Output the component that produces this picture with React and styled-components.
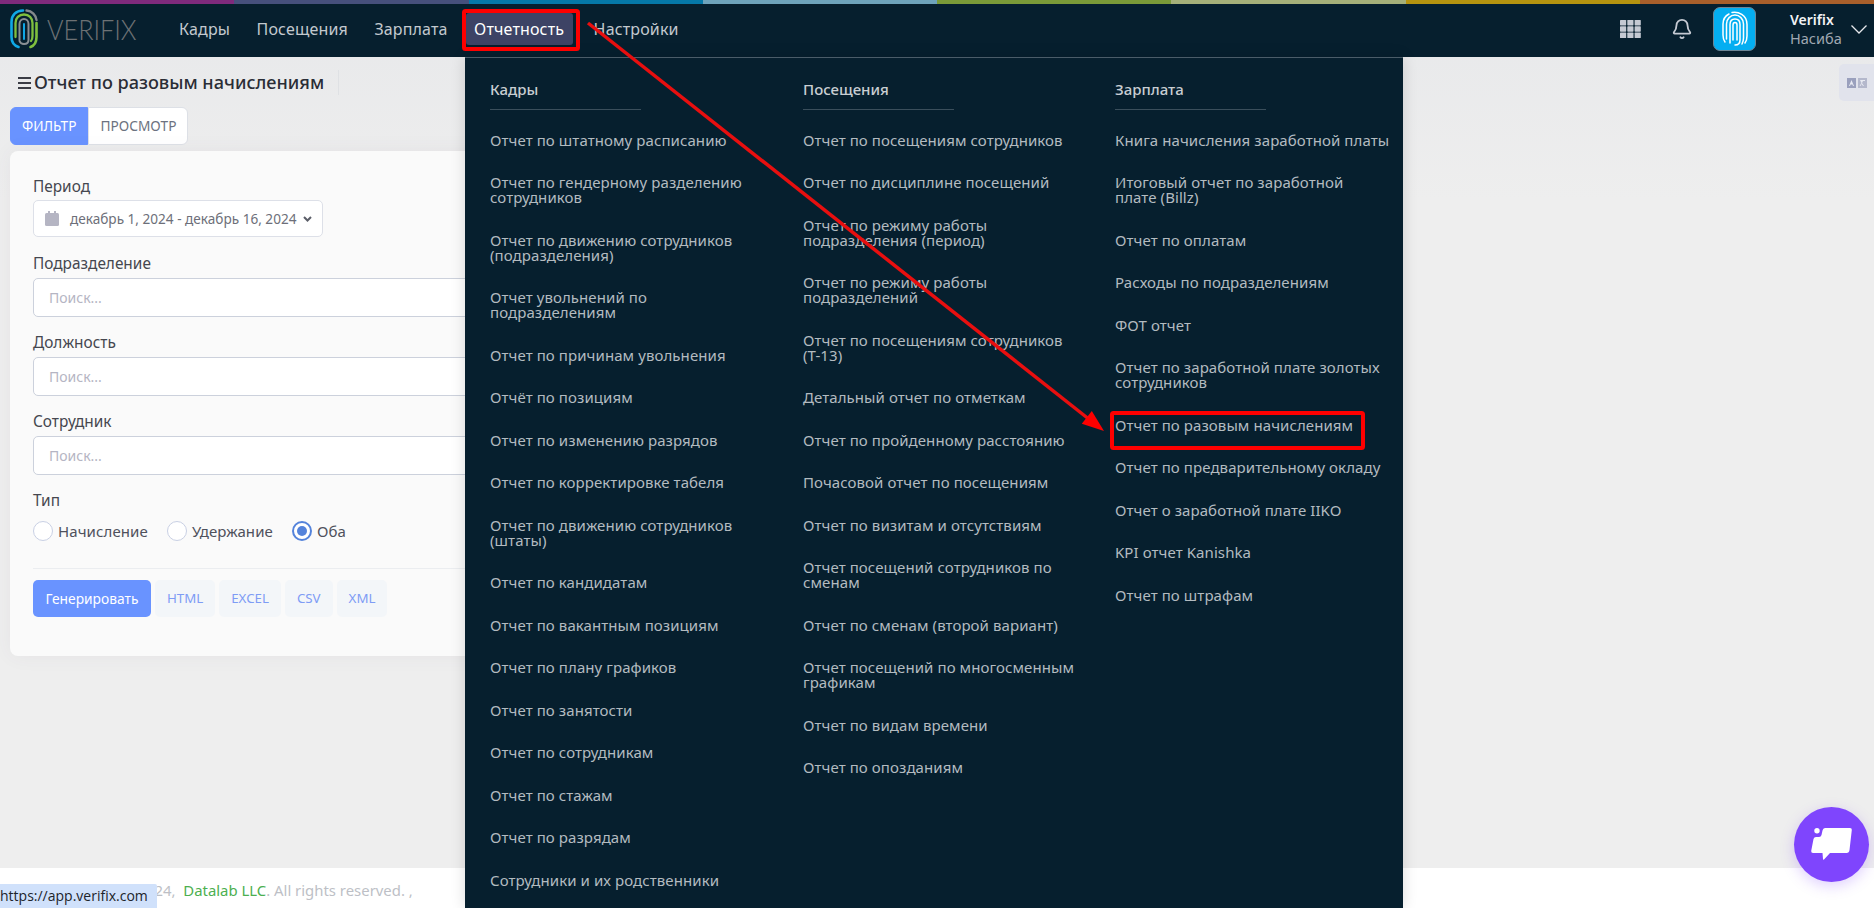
import React from "react";
import styled, { createGlobalStyle } from "styled-components";
import { Bell } from "lucide-react";

const Global = createGlobalStyle`
  html, body { margin: 0; padding: 0; height: 100%; overflow: hidden; }
  body { font-family: "Noto Sans", "Open Sans", sans-serif; background: #eeeeee; }
  * { box-sizing: border-box; }
`;

const Page = styled.div`
  position: relative;
  width: 1874px;
  height: 908px;
  overflow: hidden;
  display: flex;
  flex-direction: column;
  background: linear-gradient(180deg, #e7e8ea 0, #eeeeee 200px);
`;

const Strip = styled.div`
  height: 4px;
  flex: none;
  display: grid;
  grid-template-columns: repeat(8, 1fr);
`;
const StripPart = styled.div`
  background: ${(p) => p.$c};
`;

const Header = styled.header`
  height: 53px;
  flex: none;
  background: #061f2e;
  display: flex;
  align-items: center;
  padding: 0 7px 3px 10px;
`;
const Logo = styled.div`
  display: flex;
  align-items: center;
  gap: 9px;
  width: 160.5px;
`;
const LogoWord = styled.span`
  font-family: "Lato", "Liberation Sans", sans-serif;
  font-size: 28px;
  font-weight: 300;
  color: #6d7174;
  display: inline-block;
  transform: scaleX(0.9);
  transform-origin: left center;
`;
const Nav = styled.nav`
  display: flex;
  align-items: center;
  gap: 9.5px;
`;
const NavItem = styled.a`
  font-size: 16px;
  letter-spacing: 0.15px;
  line-height: 32px;
  height: 32px;
  padding: 0 8.5px;
  margin-right: ${(p) => (p.$active ? "3px" : "0")};
  border-radius: 3px;
  color: ${(p) => (p.$active ? "#ffffff" : "#c3c9ce")};
  background: ${(p) => (p.$active ? "#3d4365" : "transparent")};
`;
const HeaderRight = styled.div`
  margin-left: auto;
  display: flex;
  align-items: center;
`;
const IconSlot = styled.div`
  width: 51px;
  display: flex;
  justify-content: center;
  color: #c5cad3;
`;
const Avatar = styled.div`
  width: 43px;
  height: 44px;
  border-radius: 7px;
  background: #04aef1;
  border: 1px solid #6c8595;
  display: flex;
  align-items: center;
  justify-content: center;
  margin: 0 34px 0 6px;
`;
const UserBlock = styled.div`
  display: flex;
  flex-direction: column;
  line-height: 19px;
  width: 61px;
`;
const UserName = styled.span`
  font-size: 14px;
  font-weight: 600;
  color: #f2f3f5;
`;
const UserRole = styled.span`
  font-size: 14.5px;
  color: #a0a8b2;
`;

const Content = styled.main`
  flex: 1;
  padding: 13px 10px 0;
  display: flex;
  flex-direction: column;
`;
const TitleRow = styled.div`
  display: flex;
  align-items: center;
  height: 25px;
  margin-bottom: 12px;
  padding-left: 8px;
`;
const Title = styled.h1`
  margin: 0 0 0 3px;
  font-size: 18.1px;
  font-weight: 500;
  color: #2a2d36;
  padding-right: 14px;
  border-right: 1px solid #dfe1e4;
  line-height: 25px;
`;
const Tabs = styled.div`
  display: flex;
  width: fit-content;
  height: 38px;
  margin-bottom: 6px;
`;
const Tab = styled.div`
  font-size: 13.7px;
  line-height: 36px;
  padding: 0 11px;
  border: 1px solid ${(p) => (p.$active ? "#6993ff" : "#dde0e6")};
  border-radius: ${(p) => (p.$active ? "6px 0 0 6px" : "0 6px 6px 0")};
  background: ${(p) => (p.$active ? "#6993ff" : "#ffffff")};
  color: ${(p) => (p.$active ? "#ffffff" : "#6c7280")};
`;
const Card = styled.section`
  width: 900px;
  height: 505px;
  background: #fafafa;
  border-radius: 8px;
  padding: 25.5px 23px;
  box-shadow: 0 0 20px rgba(82, 63, 105, 0.06);
`;
const Label = styled.div`
  font-size: 15.4px;
  line-height: 19px;
  color: #45474f;
  margin-bottom: ${(p) => p.$gap ?? 5.5}px;
`;
const DatePicker = styled.div`
  width: 290px;
  height: 37px;
  margin-bottom: 16.5px;
  background: #fff;
  border: 1px solid #dde0e8;
  border-radius: 5px;
  display: flex;
  align-items: center;
  padding-left: 11px;
  font-size: 13.6px;
  color: #6d6f79;
`;
const DateText = styled.span`
  margin-left: 11px;
  margin-right: 7px;
  white-space: nowrap;
`;
const SearchField = styled.div`
  height: 39px;
  margin-bottom: 15.5px;
  background: #fff;
  border: 1px solid #ccd1dc;
  border-radius: 5px;
  padding-left: 15px;
  line-height: 37px;
  font-size: 14px;
  color: #b5b5c3;
`;
const RadioRow = styled.div`
  display: flex;
  align-items: center;
  gap: 19px;
  margin-top: 11.5px;
`;
const RadioLabel = styled.label`
  display: flex;
  align-items: center;
  gap: 5px;
  font-size: 15px;
  letter-spacing: 0.1px;
  line-height: 20px;
  color: #4f515c;
`;
const RadioMark = styled.span`
  width: 20px;
  height: 20px;
  border-radius: 50%;
  background: #fff;
  border: ${(p) => (p.$on ? "2px solid #5483db" : "1px solid #c9d0e4")};
  display: flex;
  align-items: center;
  justify-content: center;
  &::after {
    content: "";
    display: ${(p) => (p.$on ? "block" : "none")};
    width: 10px;
    height: 10px;
    border-radius: 50%;
    background: #5483db;
  }
`;
const Divider = styled.hr`
  border: 0;
  border-top: 1px solid #ebedf0;
  margin: 27px 0 11px;
`;
const Buttons = styled.div`
  display: flex;
  gap: 4px;
`;
const Button = styled.div`
  height: 37px;
  line-height: 37px;
  padding: 0 ${(p) => (p.$primary ? "12.5px" : "12px")};
  border-radius: 5px;
  font-size: ${(p) => (p.$primary ? "13.8px" : "13.3px")};
  background: ${(p) => (p.$primary ? "#6993ff" : "#f3f6f9")};
  color: ${(p) => (p.$primary ? "#ffffff" : "#7e9cf5")};
`;

const Footer = styled.footer`
  height: 40px;
  flex: none;
  background: #ffffff;
  padding: 12px 0 0 154.5px;
  font-size: 14.9px;
  line-height: 20px;
  color: #bdbfc6;
  white-space: pre;
`;
const FooterLink = styled.span`
  color: #4caf50;
`;

const LangButton = styled.div`
  position: absolute;
  right: 0;
  top: 64px;
  width: 35px;
  height: 37px;
  background: #e1e3ec;
  border-radius: 5px 0 0 5px;
  display: flex;
  align-items: center;
  justify-content: center;
`;

const Mega = styled.div`
  position: absolute;
  left: 465px;
  top: 57px;
  width: 938px;
  height: 851px;
  background: #061f2e;
  border-top: 1px solid #4a5c68;
  box-shadow: 0 0 14px rgba(0, 0, 0, 0.14);
  display: grid;
  grid-template-columns: 313px 312px 1fr;
  padding: 21px 0 0 25px;
`;
const MegaCol = styled.div`
  display: flex;
  flex-direction: column;
`;
const MegaHead = styled.div`
  font-size: 15px;
  font-weight: 500;
  line-height: 20px;
  color: #c9ced2;
  width: 151px;
  height: 31px;
  border-bottom: 1px solid #3a4e5b;
  margin-bottom: 8.5px;
`;
const MegaLink = styled.a`
  display: block;
  font-size: 15px;
  letter-spacing: 0.08px;
  line-height: 15px;
  padding: 14px 0 13.5px;
  color: #b3bbc0;
  width: 278px;
`;

const Chat = styled.div`
  position: absolute;
  left: 1794px;
  top: 807px;
  width: 75px;
  height: 75px;
  border-radius: 50%;
  background: #7f45fd;
  box-shadow: 0 4px 14px rgba(127, 69, 253, 0.25);
  display: flex;
  align-items: center;
  justify-content: center;
`;
const StatusTip = styled.div`
  position: absolute;
  left: 0;
  bottom: 0;
  height: 24px;
  width: 157px;
  background: #d0e1fb;
  border-top-right-radius: 2px;
  font-family: "Open Sans", sans-serif;
  font-size: 14px;
  line-height: 24px;
  color: #20242a;
  white-space: nowrap;
`;
const Annotation = styled.svg`
  position: absolute;
  inset: 0;
  pointer-events: none;
`;

const kadry = [
  "Отчет по штатному расписанию",
  "Отчет по гендерному разделению сотрудников",
  "Отчет по движению сотрудников (подразделения)",
  "Отчет увольнений по подразделениям",
  "Отчет по причинам увольнения",
  "Отчёт по позициям",
  "Отчет по изменению разрядов",
  "Отчет по корректировке табеля",
  "Отчет по движению сотрудников (штаты)",
  "Отчет по кандидатам",
  "Отчет по вакантным позициям",
  "Отчет по плану графиков",
  "Отчет по занятости",
  "Отчет по сотрудникам",
  "Отчет по стажам",
  "Отчет по разрядам",
  "Сотрудники и их родственники",
];
const visits = [
  "Отчет по посещениям сотрудников",
  "Отчет по дисциплине посещений",
  "Отчет по режиму работы подразделения (период)",
  "Отчет по режиму работы подразделений",
  "Отчет по посещениям сотрудников (Т-13)",
  "Детальный отчет по отметкам",
  "Отчет по пройденному расстоянию",
  "Почасовой отчет по посещениям",
  "Отчет по визитам и отсутствиям",
  "Отчет посещений сотрудников по сменам",
  "Отчет по сменам (второй вариант)",
  "Отчет посещений по многосменным графикам",
  "Отчет по видам времени",
  "Отчет по опозданиям",
];
const salary = [
  "Книга начисления заработной платы",
  "Итоговый отчет по заработной плате\u00A0(Billz)",
  "Отчет по оплатам",
  "Расходы по подразделениям",
  "ФОТ отчет",
  "Отчет по заработной плате золотых сотрудников",
  "Отчет по разовым начислениям",
  "Отчет по предварительному окладу",
  "Отчет о заработной плате IIKO",
  "KPI отчет Kanishka",
  "Отчет по штрафам",
];

const LogoMark = () => (
  <svg width="28" height="40" viewBox="0 0 28 40" fill="none" strokeLinecap="round">
    <path d="M13 1.500C6 1.500 1.500 6 1.500 13v15c0 5 2.500 8.500 7 10" stroke="#0fa8e6" strokeWidth="2.600" />
    <path d="M16.500 1.500C22 2 26 6 26.500 11" stroke="#85898c" strokeWidth="2.400" />
    <path d="M26.500 14v14c0 5-2 8.500-6 10" stroke="#7fbf3f" strokeWidth="2.600" />
    <path d="M5.500 28V14c0-5 3.500-8.500 8.500-8.500s8.500 3.500 8.500 8.500v13c0 2-.5 4-1.500 5" stroke="#7fbf3f" strokeWidth="2.300" />
    <path d="M9.500 31V15c0-3 2-5 4.500-5s4.500 2 4.500 5v16c0 2.500-2 4-4.500 4s-4-1.500-4.500-3" stroke="#8a8f94" strokeWidth="2" />
    <path d="M14 15v15" stroke="#0fa8e6" strokeWidth="2" />
  </svg>
);
const AvatarMark = () => (
  <svg width="28" height="36" viewBox="0 0 28 36" fill="none" stroke="#fff" strokeWidth="1.500" strokeLinecap="round">
    <path d="M8 3C4 5 2 9 2 13v11c0 3 .5 5 2 7" />
    <path d="M11 1.500c6-1 15 2 15 12V25c0 3-.5 5-2 7" />
    <path d="M5.500 28V13c0-5 4-9 8.500-9s8.500 4 8.500 9v14c0 2-.5 4-1.500 6" />
    <path d="M9 32V13.500C9 10 11 8 14 8s5 2 5 5.500V29c0 3-2 5-5 5" />
    <path d="M12 29V14c0-1.500.8-2.500 2-2.500s2 1 2 2.500v15" />
  </svg>
);

export default function App() {
  return (
    <Page>
      <Global />
      <Strip>
        {["#7f2a7c", "#46507c", "#0578a8", "#6ea3bb", "#7a9a38", "#a5b07a", "#b5930f", "#a85f2b"].map((c) => (
          <StripPart key={c} $c={c} />
        ))}
      </Strip>
      <Header>
        <Logo>
          <LogoMark />
          <LogoWord>VERIFIX</LogoWord>
        </Logo>
        <Nav>
          <NavItem>Кадры</NavItem>
          <NavItem>Посещения</NavItem>
          <NavItem>Зарплата</NavItem>
          <NavItem $active>Отчетность</NavItem>
          <NavItem>Настройки</NavItem>
        </Nav>
        <HeaderRight>
          <IconSlot>
            <svg width="21" height="18" viewBox="0 0 21 18" fill="currentColor">
              {[0, 7.3, 14.6].map((x) =>
                [0, 6.3, 12.6].map((y) => <rect key={`${x}-${y}`} x={x} y={y} width="6.2" height="5.400" rx="0.6" />)
              )}
            </svg>
          </IconSlot>
          <IconSlot>
            <Bell size={22} strokeWidth={2} />
          </IconSlot>
          <Avatar>
            <AvatarMark />
          </Avatar>
          <UserBlock>
            <UserName>Verifix</UserName>
            <UserRole>Насиба</UserRole>
          </UserBlock>
          <svg width="16" height="9" viewBox="0 0 16 9" fill="none" stroke="#e6e8ec" strokeWidth="1.300">
            <path d="M.5 .5 8 8l7.500-7.500" />
          </svg>
        </HeaderRight>
      </Header>
      <Content>
        <TitleRow>
          <svg width="13" height="12" viewBox="0 0 13 12" fill="#3b3d45">
            <rect y="0" width="13" height="2" />
            <rect y="5" width="13" height="2" />
            <rect y="10" width="13" height="2" />
          </svg>
          <Title>Отчет по разовым начислениям</Title>
        </TitleRow>
        <Tabs>
          <Tab $active>ФИЛЬТР</Tab>
          <Tab>ПРОСМОТР</Tab>
        </Tabs>
        <Card>
          <Label $gap={4.5}>Период</Label>
          <DatePicker>
            <svg width="14" height="15" viewBox="0 0 14 15" fill="#b5b5c3">
              <rect x="0" y="2" width="14" height="13" rx="1.5" />
              <rect x="3" y="0" width="2" height="3" />
              <rect x="9" y="0" width="2" height="3" />
            </svg>
            <DateText>декабрь 1, 2024 - декабрь 16, 2024</DateText>
            <svg width="9" height="6" viewBox="0 0 9 6" fill="none" stroke="#5b5e68" strokeWidth="2">
              <path d="M1 1l3.500 3.500L8 1" />
            </svg>
          </DatePicker>
          <Label>Подразделение</Label>
          <SearchField>Поиск...</SearchField>
          <Label>Должность</Label>
          <SearchField>Поиск...</SearchField>
          <Label>Сотрудник</Label>
          <SearchField>Поиск...</SearchField>
          <Label $gap={0}>Тип</Label>
          <RadioRow>
            <RadioLabel><RadioMark />Начисление</RadioLabel>
            <RadioLabel><RadioMark />Удержание</RadioLabel>
            <RadioLabel><RadioMark $on />Оба</RadioLabel>
          </RadioRow>
          <Divider />
          <Buttons>
            <Button $primary>Генерировать</Button>
            <Button>HTML</Button>
            <Button>EXCEL</Button>
            <Button>CSV</Button>
            <Button>XML</Button>
          </Buttons>
        </Card>
      </Content>
      <Footer>24,  <FooterLink>Datalab LLC</FooterLink>. All rights reserved. ,</Footer>

      <LangButton>
        <svg width="20" height="10" viewBox="0 0 20 10">
          <rect width="9" height="10" fill="#9aa0bd" />
          <rect x="11" width="9" height="10" fill="#b4b8cc" />
          <path d="M4.500 2 7 8H6L5.400 6.600H3.600L3 8H2Z" fill="#e8eaf2" />
          <path d="M13 2h5v1h-2l-1 2 2 3h-1l-1.500-2L13.500 8h-1l2-3-1-2z" fill="#e8eaf2" />
        </svg>
      </LangButton>

      <Mega>
        <MegaCol>
          <MegaHead>Кадры</MegaHead>
          {kadry.map((t) => <MegaLink key={t}>{t}</MegaLink>)}
        </MegaCol>
        <MegaCol>
          <MegaHead>Посещения</MegaHead>
          {visits.map((t) => <MegaLink key={t}>{t}</MegaLink>)}
        </MegaCol>
        <MegaCol>
          <MegaHead>Зарплата</MegaHead>
          {salary.map((t) => <MegaLink key={t}>{t}</MegaLink>)}
        </MegaCol>
      </Mega>

      <Chat>
        <svg width="41" height="33" viewBox="0 0 41 33" fill="#fff">
          <circle cx="6" cy="2.700" r="2.700" />
          <path d="M14 0H39q2 0 1.800 2L38.500 22q-.3 3-3 3H19l-6 6.500q-.8.800-1-.5L11.500 25H2q-2 0-1.800-2L2.500 11q.5-2 2.500-2H8q2 0 2.500-2l1-4.500Q12 0 14 0z" />
        </svg>
      </Chat>
      <StatusTip>https://app.verifix.com</StatusTip>

      <Annotation width="1874" height="908" viewBox="0 0 1874 908" fill="none">
        <rect x="464" y="11" width="114" height="38" rx="1.500" stroke="#fe0000" strokeWidth="4" />
        <rect x="1112" y="413" width="251" height="35" rx="1.500" stroke="#fe0000" strokeWidth="4" />
        <path d="M588 23 L1090 420" stroke="#e80f0f" strokeWidth="3.500" />
        <path d="M1104 431 L1081.800 423.700 L1091.800 411.100 Z" fill="#fe0000" />
      </Annotation>
    </Page>
  );
}
